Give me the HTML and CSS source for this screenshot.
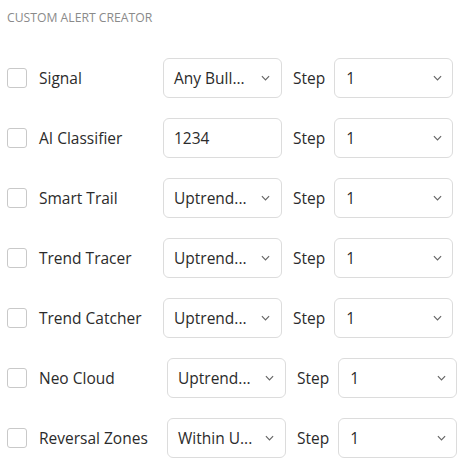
FILE: index.html
```html
<!DOCTYPE html>
<html>
<head>
<meta charset="utf-8">
<link rel="stylesheet" href="styles.css">
</head>
<body>
<div class="panel">
  <div class="title">CUSTOM ALERT CREATOR</div>
  <div class="rows">
    <div class="row">
      <span class="check"></span><span class="label">Signal</span>
      <div class="select"><span class="value">Any Bull...</span><svg class="chev" viewBox="0 0 10 6"><path d="M1 1l4 4 4-4"/></svg></div>
      <span class="step">Step</span>
      <div class="select step-select"><span class="value">1</span><svg class="chev" viewBox="0 0 10 6"><path d="M1 1l4 4 4-4"/></svg></div>
    </div>
    <div class="row">
      <span class="check"></span><span class="label">AI Classifier</span>
      <div class="select input"><span class="value">1234</span></div>
      <span class="step">Step</span>
      <div class="select step-select"><span class="value">1</span><svg class="chev" viewBox="0 0 10 6"><path d="M1 1l4 4 4-4"/></svg></div>
    </div>
    <div class="row">
      <span class="check"></span><span class="label">Smart Trail</span>
      <div class="select"><span class="value">Uptrend...</span><svg class="chev" viewBox="0 0 10 6"><path d="M1 1l4 4 4-4"/></svg></div>
      <span class="step">Step</span>
      <div class="select step-select"><span class="value">1</span><svg class="chev" viewBox="0 0 10 6"><path d="M1 1l4 4 4-4"/></svg></div>
    </div>
    <div class="row">
      <span class="check"></span><span class="label">Trend Tracer</span>
      <div class="select"><span class="value">Uptrend...</span><svg class="chev" viewBox="0 0 10 6"><path d="M1 1l4 4 4-4"/></svg></div>
      <span class="step">Step</span>
      <div class="select step-select"><span class="value">1</span><svg class="chev" viewBox="0 0 10 6"><path d="M1 1l4 4 4-4"/></svg></div>
    </div>
    <div class="row">
      <span class="check"></span><span class="label">Trend Catcher</span>
      <div class="select"><span class="value">Uptrend...</span><svg class="chev" viewBox="0 0 10 6"><path d="M1 1l4 4 4-4"/></svg></div>
      <span class="step">Step</span>
      <div class="select step-select"><span class="value">1</span><svg class="chev" viewBox="0 0 10 6"><path d="M1 1l4 4 4-4"/></svg></div>
    </div>
    <div class="row wide">
      <span class="check"></span><span class="label">Neo Cloud</span>
      <div class="select"><span class="value">Uptrend...</span><svg class="chev" viewBox="0 0 10 6"><path d="M1 1l4 4 4-4"/></svg></div>
      <span class="step">Step</span>
      <div class="select step-select"><span class="value">1</span><svg class="chev" viewBox="0 0 10 6"><path d="M1 1l4 4 4-4"/></svg></div>
    </div>
    <div class="row wide">
      <span class="check"></span><span class="label">Reversal Zones</span>
      <div class="select"><span class="value">Within U...</span><svg class="chev" viewBox="0 0 10 6"><path d="M1 1l4 4 4-4"/></svg></div>
      <span class="step">Step</span>
      <div class="select step-select"><span class="value">1</span><svg class="chev" viewBox="0 0 10 6"><path d="M1 1l4 4 4-4"/></svg></div>
    </div>
  </div>
</div>
</body>
</html>
```

FILE: styles.css
```css
html, body {
  margin: 0;
  padding: 0;
  background: #ffffff;
}
body {
  font-family: "Open Sans", "Noto Sans", sans-serif;
  color: #2b2b2b;
}
.panel {
  padding: 10px 7px 0 7px;
}
.title {
  font-size: 12.2px;
  line-height: 16px;
  color: #8a8a8a;
  margin-bottom: 22px;
}
.row {
  display: flex;
  align-items: center;
  height: 60px;
}
.check {
  width: 20px;
  height: 20px;
  border: 1px solid #c9c9c9;
  border-radius: 3px;
  box-sizing: border-box;
  margin-right: 12px;
  flex-shrink: 0;
}
.label {
  font-size: 15.5px;
  width: 124px;
}
.row.wide .label {
  width: 128px;
}
.select {
  box-sizing: border-box;
  width: 119px;
  height: 40px;
  border: 1px solid #dcdcdc;
  border-radius: 6px;
  display: flex;
  align-items: center;
  justify-content: space-between;
  padding: 0 11px 0 10px;
  font-size: 15.5px;
}
.chev {
  width: 9px;
  height: 6px;
  fill: none;
  stroke: #666;
  stroke-width: 1.3;
}
.step {
  font-size: 15.5px;
  margin: 0 9px 0 11px;
}
.step-select {
  padding-left: 11px;
  padding-right: 10px;
}
```
